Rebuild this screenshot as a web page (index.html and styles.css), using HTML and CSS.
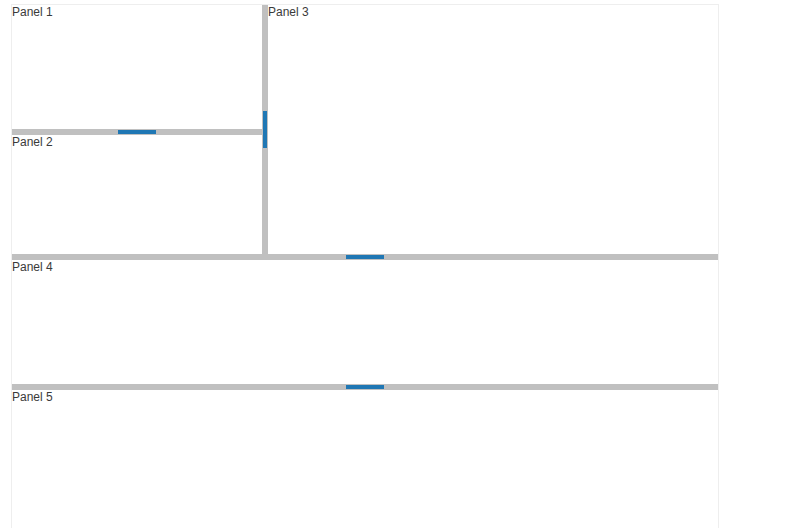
FILE: index.html
```html
<!DOCTYPE html>
<html>
<head>
<meta charset="utf-8">
<link rel="stylesheet" href="styles.css">
</head>
<body>
<div class="container">
  <div class="top">
    <div class="left">
      <div class="panel p1">Panel 1</div>
      <div class="gutter-h"><span class="handle-h"></span></div>
      <div class="panel p2">Panel 2</div>
    </div>
    <div class="gutter-v"><span class="handle-v"></span></div>
    <div class="panel p3">Panel 3</div>
  </div>
  <div class="gutter-h"><span class="handle-h"></span></div>
  <div class="panel p4">Panel 4</div>
  <div class="gutter-h"><span class="handle-h"></span></div>
  <div class="panel p5">Panel 5</div>
</div>
</body>
</html>
```
FILE: styles.css
```css
html, body {
  margin: 0;
  padding: 0;
  overflow: hidden;
  background: #fff;
}
body {
  font-family: "Liberation Sans", Arial, sans-serif;
  font-size: 12px;
  color: #3a3a3a;
  height: 528px;
}
.container {
  margin: 4px 0 0 11px;
  width: 706px;
  border: 1px solid #eeeeee;
  border-bottom: none;
  display: flex;
  flex-direction: column;
}
.top {
  display: flex;
  height: 249px;
}
.left {
  width: 250px;
  display: flex;
  flex-direction: column;
}
.panel {
  line-height: 14px;
  overflow: hidden;
}
.p1 { height: 124px; }
.p2 { flex: 1; }
.p3 { flex: 1; }
.p4 { height: 124px; }
.p5 { height: 138px; }
.gutter-h {
  height: 6px;
  background: #c0c0c0;
  display: flex;
  align-items: center;
  justify-content: center;
  flex: none;
}
.handle-h {
  width: 38px;
  height: 4px;
  background: #1f77b4;
}
.gutter-v {
  width: 6px;
  background: #c0c0c0;
  display: flex;
  align-items: center;
  justify-content: center;
  flex: none;
}
.handle-v {
  width: 4px;
  height: 37px;
  background: #1f77b4;
}
```
